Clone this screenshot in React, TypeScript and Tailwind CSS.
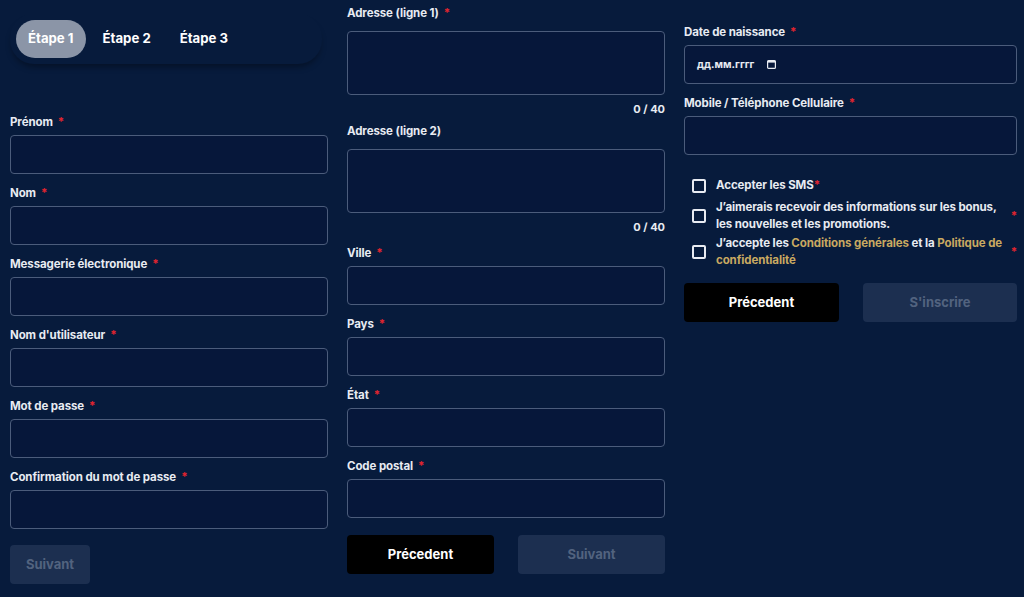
import React from 'react';

const Req = () => <span className="text-[#e0242f] ml-[5px]">*</span>;

const Label = ({ text, required = true, className = '' }: { text: string; required?: boolean; className?: string }) => (
  <div className={`text-[11.5px] leading-[14px] font-bold tracking-[-0.1px] text-[#e8ebf2] ${className}`}>
    {text}
    {required && <Req />}
  </div>
);

const Input = ({ className = '' }: { className?: string }) => (
  <div className={`h-[39px] w-full rounded-[4px] border border-[#4b5c7b] bg-[#06173a] ${className}`} />
);

const Field = ({ label, required = true, top = 12 }: { label: string; required?: boolean; top?: number }) => (
  <div className={top === 0 ? '' : 'mt-[12px]'}>
    <Label text={label} required={required} className="mb-[6px]" />
    <Input />
  </div>
);

const TextArea = ({ label, required }: { label: string; required: boolean }) => (
  <div>
    <Label text={label} required={required} className="mb-[11px]" />
    <div className="h-[64px] w-full rounded-[4px] border border-[#4b5c7b] bg-[#06173a]" />
    <div className="mt-[7px] text-right text-[11px] leading-[14px] font-bold text-[#e8ebf2]">0 / 40</div>
  </div>
);

const Checkbox = () => (
  <span className="h-[14px] w-[14px] shrink-0 rounded-[2px] border-2 border-[#e8ebf2]" />
);

const BlackButton = ({ text, className = '' }: { text: string; className?: string }) => (
  <button className={`h-[39px] rounded-[4px] bg-black text-[13px] font-bold text-white ${className}`}>{text}</button>
);

const DisabledButton = ({ text, className = '' }: { text: string; className?: string }) => (
  <button className={`h-[39px] rounded-[4px] bg-[#1c2f50] text-[13px] font-bold text-[#52637f] ${className}`}>{text}</button>
);

export default function App() {
  return (
    <div
      className="h-[597px] w-[1024px] overflow-hidden bg-[#071b3c] pl-[10px]"
      style={{ fontFamily: 'Inter, "Noto Sans", sans-serif' }}
    >
      <div className="grid grid-cols-[318px_318px_333px] gap-x-[19px]">
        {/* Column 1 */}
        <div className="pt-[14px]">
          <div className="flex w-[312px] gap-[5px] rounded-[24px] p-[6px] shadow-[0_5px_6px_-2px_rgba(0,0,0,0.35)]">
            <button className="h-[38px] rounded-full bg-[#8b95a7] px-3 text-[13.2px] font-bold text-white">Étape 1</button>
            <button className="h-[38px] rounded-full px-3 text-[13.2px] font-bold text-white">Étape 2</button>
            <button className="h-[38px] rounded-full px-3 text-[13.2px] font-bold text-white">Étape 3</button>
          </div>
          <div className="mt-[51px]">
            <Field label="Prénom" top={0} />
            <Field label="Nom" />
            <Field label="Messagerie électronique" />
            <Field label="Nom d'utilisateur" />
            <Field label="Mot de passe" />
            <Field label="Confirmation du mot de passe" />
          </div>
          <DisabledButton text="Suivant" className="mt-[16px] w-[80px]" />
        </div>

        {/* Column 2 */}
        <div className="pt-[6px]">
          <TextArea label="Adresse (ligne 1)" required />
          <div className="mt-[8px]">
            <TextArea label="Adresse (ligne 2)" required={false} />
          </div>
          <div className="mt-[12px]">
            <Field label="Ville" top={0} />
          </div>
          <Field label="Pays" />
          <Field label="État" />
          <Field label="Code postal" />
          <div className="mt-[17px] flex justify-between">
            <BlackButton text="Précedent" className="w-[147px]" />
            <DisabledButton text="Suivant" className="w-[147px]" />
          </div>
        </div>

        {/* Column 3 */}
        <div className="pt-[25px]">
          <Label text="Date de naissance" className="mb-[6px]" />
          <div className="flex h-[39px] w-full items-center rounded-[4px] border border-[#4b5c7b] bg-[#06173a] pl-[12px]">
            <span className="text-[10.5px] font-bold text-[#e8ebf2]">дд.мм.гггг</span>
            <svg className="ml-[13px]" width="9" height="9" viewBox="0 0 9 9">
              <rect x="0.6" y="0.6" width="7.8" height="7.8" rx="1" fill="none" stroke="#e8ebf2" strokeWidth="1.2" />
              <rect x="0.6" y="0.6" width="7.8" height="2" fill="#e8ebf2" />
            </svg>
          </div>
          <Field label="Mobile / Téléphone Cellulaire" />
          <div className="mt-[22px] flex flex-col gap-[5px] pl-[8px] text-[11.5px] leading-[17px] font-bold tracking-[-0.1px] text-[#e8ebf2]">
            <div className="flex items-center gap-[10px]">
              <Checkbox />
              <span>
                Accepter les SMS<span className="text-[#e0242f]">*</span>
              </span>
            </div>
            <div className="flex items-center gap-[10px]">
              <Checkbox />
              <div className="flex flex-1 items-center gap-[4px]">
                <p className="flex-1">J’aimerais recevoir des informations sur les bonus, les nouvelles et les promotions.</p>
                <span className="text-[#e0242f]">*</span>
              </div>
            </div>
            <div className="-mt-[3px] flex items-center gap-[10px]">
              <Checkbox />
              <div className="flex flex-1 items-center gap-[4px]">
                <div className="flex-1">
                  <div>
                    J’accepte les <span className="text-[#c9a961]">Conditions générales</span> et la{' '}
                    <span className="text-[#c9a961]">Politique de</span>
                  </div>
                  <div className="text-[#c9a961]">confidentialité</div>
                </div>
                <span className="text-[#e0242f]">*</span>
              </div>
            </div>
          </div>
          <div className="mt-[14px] flex justify-between">
            <BlackButton text="Précedent" className="w-[155px]" />
            <DisabledButton text="S'inscrire" className="w-[154px]" />
          </div>
        </div>
      </div>
    </div>
  );
}
